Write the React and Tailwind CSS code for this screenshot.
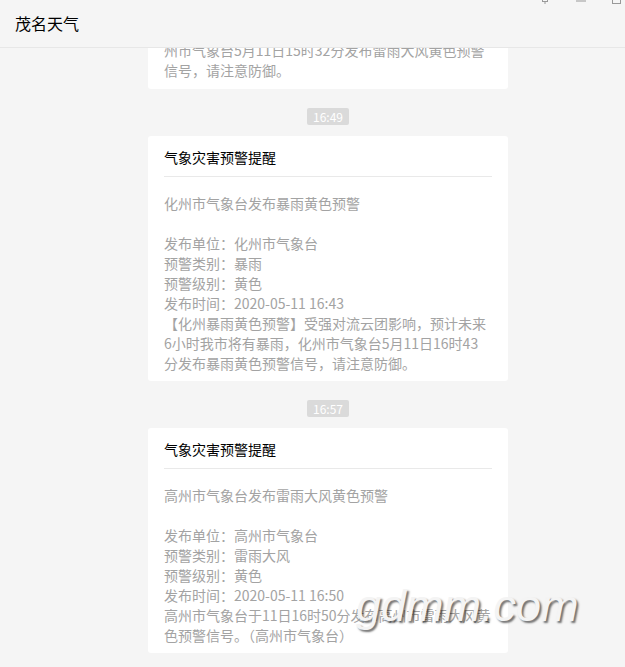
const FONT = { fontFamily: '"Microsoft YaHei", "Noto Sans CJK SC", "Noto Sans", sans-serif' };

const cards = [
  {
    time: '16:49',
    subject: '化州市气象台发布暴雨黄色预警',
    fields: [
      '发布单位：化州市气象台',
      '预警类别：暴雨',
      '预警级别：黄色',
      '发布时间：2020-05-11 16:43',
      '【化州暴雨黄色预警】受强对流云团影响，预计未来',
      '6小时我市将有暴雨，化州市气象台5月11日16时43',
      '分发布暴雨黄色预警信号，请注意防御。',
    ],
  },
  {
    time: '16:57',
    subject: '高州市气象台发布雷雨大风黄色预警',
    fields: [
      '发布单位：高州市气象台',
      '预警类别：雷雨大风',
      '预警级别：黄色',
      '发布时间：2020-05-11 16:50',
      '高州市气象台于11日16时50分发布高州市雷雨大风黄',
      '色预警信号。（高州市气象台）',
    ],
  },
];

function TimeStamp({ time }) {
  return (
    <div className="flex justify-center mt-[19px] mb-[11px]">
      <div className="h-[17px] px-[6px] rounded-[2px] bg-[#dadada] text-white text-[12px] leading-[17px]">
        {time}
      </div>
    </div>
  );
}

function AlertCard({ subject, fields }) {
  return (
    <div className="bg-white rounded-[3px] px-4 pt-[11px] pb-2">
      <div className="text-[14px] leading-5 text-black">气象灾害预警提醒</div>
      <div className="h-px bg-[#e9e9e9] mt-[9px] mb-4"></div>
      <div className="text-[14px] leading-5 text-[#a3a3a3]">
        <div className="whitespace-nowrap">{subject}</div>
        <div className="h-5"></div>
        {fields.map((line, i) => (
          <div key={i} className="whitespace-nowrap">{line}</div>
        ))}
      </div>
    </div>
  );
}

export default function App() {
  return (
    <div className="relative w-[625px] h-[667px] overflow-hidden bg-[#f5f5f5] flex flex-col" style={FONT}>
      {/* Header */}
      <div className="relative z-10 h-[48px] flex-shrink-0 bg-[#f5f5f5] border-b border-[#e7e7e7] flex items-center pl-[15px]">
        <div className="text-[16px] text-black leading-6 -mt-px">茂名天气</div>
        <div className="absolute top-[-7px] right-0 flex items-start gap-[26px] pr-[3px]">
          <svg width="10" height="11" viewBox="0 0 10 11" fill="none" stroke="#999" strokeWidth="1">
            <rect x="2.5" y="0.5" width="5" height="8" />
            <line x1="5" y1="8.5" x2="5" y2="11" />
          </svg>
          <svg width="10" height="9" viewBox="0 0 10 9" fill="none" stroke="#999" strokeWidth="1">
            <line x1="0" y1="8" x2="10" y2="8" />
          </svg>
          <svg width="10" height="11" viewBox="0 0 10 11" fill="none" stroke="#999" strokeWidth="1">
            <rect x="0.5" y="0.5" width="8" height="10" />
          </svg>
        </div>
      </div>

      {/* Messages */}
      <div className="flex-1 overflow-hidden">
        <div className="w-[360px] ml-[148px]">
          <div className="bg-white rounded-[3px] px-4 pb-[9px] -mt-[8px]">
            <div className="text-[14px] leading-5 text-[#a3a3a3]">
              <div className="whitespace-nowrap">州市气象台5月11日15时32分发布雷雨大风黄色预警</div>
              <div className="whitespace-nowrap">信号，请注意防御。</div>
            </div>
          </div>
          {cards.map((c) => (
            <div key={c.time}>
              <TimeStamp time={c.time} />
              <AlertCard subject={c.subject} fields={c.fields} />
            </div>
          ))}
        </div>
      </div>

      {/* Watermark */}
      <div
        className="absolute left-[356px] top-[578px] text-[45px] italic leading-[56px] text-[#f4f4f4] whitespace-nowrap pointer-events-none"
        style={{ fontFamily: '"Liberation Sans", sans-serif', textShadow: '2px 2px 2px rgba(0,0,0,0.55)' }}
      >
        gdmm.com
      </div>
    </div>
  );
}
